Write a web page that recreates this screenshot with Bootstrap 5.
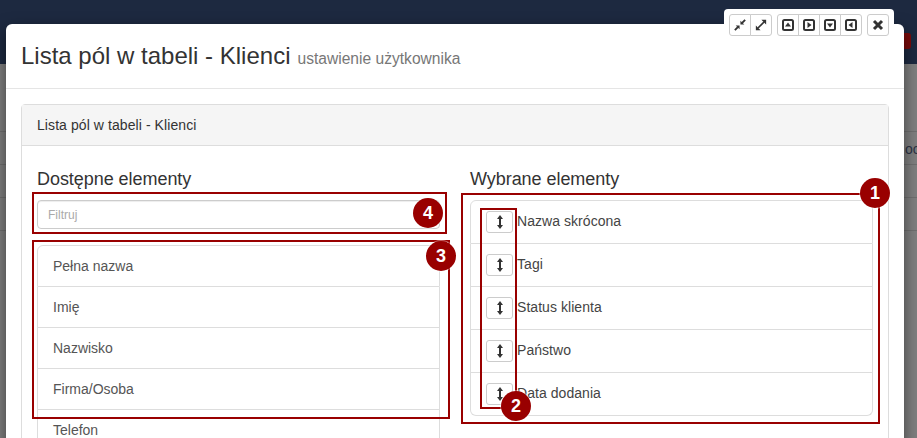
<!DOCTYPE html>
<html lang="pl"><head><meta charset="utf-8"><title>Lista pól</title>
<link href="https://cdn.jsdelivr.net/npm/bootstrap@5.3.0/dist/css/bootstrap.min.css" rel="stylesheet">
<style>
html,body{height:438px;overflow:hidden}
body{font-family:"Liberation Sans",Arial,sans-serif;font-size:14px;color:#333;background:#7f7f7f;position:relative;line-height:20px}
.topbar{height:64px;background:#1d2940}
.backrow{height:33px;border-bottom:1px solid #6f6f6f;color:#2c3344;line-height:35px;overflow:hidden;padding-left:905px;white-space:nowrap}
.backrows{padding-top:35px}
.alert-chip{position:absolute;left:890px;top:33px;width:21px;height:16px;border-radius:3px;background:#7a0a0a}
.dlg{position:absolute;left:6px;top:24px;width:898px;height:414px;overflow:hidden;background:#fff;border-radius:6px 6px 0 0}
.shade{position:absolute;left:6px;top:24px;width:898px;height:460px;border-radius:6px;box-shadow:0 5px 15px rgba(0,0,0,.5)}
.dlg-head{height:65px;border-bottom:1px solid #e5e5e5;padding:16px 15px 0;display:flex;align-items:baseline;gap:7px}
.dlg-title{font-size:24px;line-height:31px;font-weight:400;margin:0;color:#333}
.dlg-sub{font-size:15.6px;color:#777}
.dlg-body{padding:15px}
.pane{border-radius:4px;--bs-card-border-color:#ddd}
.pane-head{height:41px;background:#f5f5f5;border-bottom:1px solid #ddd;padding:10px 15px;line-height:21px;color:#333;letter-spacing:.08px}
.pane-body{padding:0 15px;gap:30px;display:grid;grid-template-columns:403px 403px}
.col-title{font-size:18px;line-height:20px;font-weight:400;color:#333;margin:23px 0 11px;letter-spacing:-.05px}
.filter{height:29px;width:403px;font-size:12px;padding:4px 10px;border:1px solid #ccc;border-radius:4px;box-shadow:inset 0 1px 1px rgba(0,0,0,.075);font-family:inherit}
.filter::placeholder{color:#aaa}
.avail{margin-top:16px;--bs-list-group-border-color:#ddd}
.avail .list-group-item{height:41px;padding:10px 15px;color:#555;line-height:20px;font-size:14px}
.avail .list-group-item:first-child{height:42px;padding-bottom:11px}
.chosen{--bs-list-group-border-color:#ddd}
.chosen .list-group-item{height:43px;padding:9px 15px 11px;color:#444;display:flex;align-items:center;gap:4px;font-size:14px;letter-spacing:.05px}
.chosen .list-group-item:first-child{height:44px}
.grip{width:27px;height:22px;padding:0;margin-top:2px;border:1px solid #ccc;border-radius:3px;background:#fff;display:flex;align-items:center;justify-content:center;flex:none}
.tools{position:absolute;left:724px;top:9px;width:170px;height:40px;background:#fff;border-radius:4px;display:flex;gap:5px;padding:5px;align-items:flex-start}
.tbtn{height:22px;padding:0;width:22px;background:#fff;border:1px solid #ccc;display:flex;align-items:center;justify-content:center;border-radius:3px;--bs-btn-border-color:#ccc}
.tbtn svg,.grip svg{display:block}
.mark-box{position:absolute;border:2px solid #990000;pointer-events:none}
.mark-num{position:absolute;width:30px;height:30px;border-radius:50%;background:#990000;color:#fff;font-weight:700;font-size:18px;line-height:31px;text-align:center;box-shadow:0 0 0 1px rgba(255,255,255,.4)}
</style></head>
<body>
<div class="topbar"></div>
<div class="alert-chip"></div>
<div class="backrows">
 <div class="backrow"></div><div class="backrow">oc</div><div class="backrow"></div><div class="backrow"></div>
</div>
<div class="shade"></div>
<div class="dlg">
 <div class="dlg-head"><h4 class="dlg-title">Lista pól w tabeli - Klienci</h4><span class="dlg-sub">ustawienie użytkownika</span></div>
 <div class="dlg-body">
  <div class="card pane">
   <div class="pane-head">Lista pól w tabeli - Klienci</div>
   <div class="pane-body">
    <div>
     <h5 class="col-title">Dostępne elementy</h5>
     <input class="form-control filter" placeholder="Filtruj" type="text">
     <ul class="list-group avail">
      <li class="list-group-item">Pełna nazwa</li>
      <li class="list-group-item">Imię</li>
      <li class="list-group-item">Nazwisko</li>
      <li class="list-group-item">Firma/Osoba</li>
      <li class="list-group-item">Telefon</li>
     </ul>
    </div>
    <div>
     <h5 class="col-title">Wybrane elementy</h5>
     <ul class="list-group chosen">
      <li class="list-group-item"><button class="btn grip" type="button"><svg width="8" height="14" viewBox="0 0 8 14"><path d="M4 0 7 4H5v6h2l-3 4-3-4h2V4H1z" fill="#333"/></svg></button>Nazwa skrócona</li>
      <li class="list-group-item"><button class="btn grip" type="button"><svg width="8" height="14" viewBox="0 0 8 14"><path d="M4 0 7 4H5v6h2l-3 4-3-4h2V4H1z" fill="#333"/></svg></button>Tagi</li>
      <li class="list-group-item"><button class="btn grip" type="button"><svg width="8" height="14" viewBox="0 0 8 14"><path d="M4 0 7 4H5v6h2l-3 4-3-4h2V4H1z" fill="#333"/></svg></button>Status klienta</li>
      <li class="list-group-item"><button class="btn grip" type="button"><svg width="8" height="14" viewBox="0 0 8 14"><path d="M4 0 7 4H5v6h2l-3 4-3-4h2V4H1z" fill="#333"/></svg></button>Państwo</li>
      <li class="list-group-item"><button class="btn grip" type="button"><svg width="8" height="14" viewBox="0 0 8 14"><path d="M4 0 7 4H5v6h2l-3 4-3-4h2V4H1z" fill="#333"/></svg></button>Data dodania</li>
     </ul>
    </div>
   </div>
  </div>
 </div>
</div>

<div class="tools">
 <div class="btn-group">
  <button class="btn tbtn" type="button"><svg width="12" height="12" viewBox="0 0 14 14"><path d="M13 1 9.500 4.500M1 13l3.500-3.500" stroke="#333" stroke-width="2.200"/><path d="M7.500 6.500V2l4.500 4.500zM6.500 7.500V12L2 7.500z" fill="#333"/></svg></button>
  <button class="btn tbtn" type="button"><svg width="12" height="12" viewBox="0 0 14 14"><path d="M3.500 10.500 10.500 3.500" stroke="#333" stroke-width="2"/><path d="M13 1H7.500L13 6.500zM1 13h5.500L1 7.500z" fill="#333"/></svg></button>
 </div>
 <div class="btn-group">
  <button class="btn tbtn" type="button"><svg width="12" height="12" viewBox="0 0 12 12"><rect x="1" y="1" width="10" height="10" rx="1.500" fill="none" stroke="#333" stroke-width="2"/><path d="M6 3.500 9 7.500H3z" fill="#333"/></svg></button>
  <button class="btn tbtn" type="button"><svg width="12" height="12" viewBox="0 0 12 12"><rect x="1" y="1" width="10" height="10" rx="1.500" fill="none" stroke="#333" stroke-width="2"/><path d="M8.500 6 4.500 9V3z" fill="#333"/></svg></button>
  <button class="btn tbtn" type="button"><svg width="12" height="12" viewBox="0 0 12 12"><rect x="1" y="1" width="10" height="10" rx="1.500" fill="none" stroke="#333" stroke-width="2"/><path d="M6 8.500 3 4.500h6z" fill="#333"/></svg></button>
  <button class="btn tbtn" type="button"><svg width="12" height="12" viewBox="0 0 12 12"><rect x="1" y="1" width="10" height="10" rx="1.500" fill="none" stroke="#333" stroke-width="2"/><path d="M3.500 6 7.500 3v6z" fill="#333"/></svg></button>
 </div>
 <button class="btn tbtn" type="button"><svg width="12" height="12" viewBox="0 0 12 12"><path d="M2 2l8 8M10 2l-8 8" stroke="#333" stroke-width="3"/></svg></button>
</div>

<div class="mark-box" style="left:461px;top:193px;width:419px;height:231px"></div>
<div class="mark-box" style="left:480px;top:208px;width:37px;height:201px"></div>
<div class="mark-box" style="left:32px;top:240px;width:418px;height:179px"></div>
<div class="mark-box" style="left:32px;top:192px;width:415px;height:42px"></div>
<div class="mark-num" style="left:860px;top:178px">1</div>
<div class="mark-num" style="left:501px;top:391px">2</div>
<div class="mark-num" style="left:426px;top:241px">3</div>
<div class="mark-num" style="left:413px;top:198px">4</div>
</body></html>
